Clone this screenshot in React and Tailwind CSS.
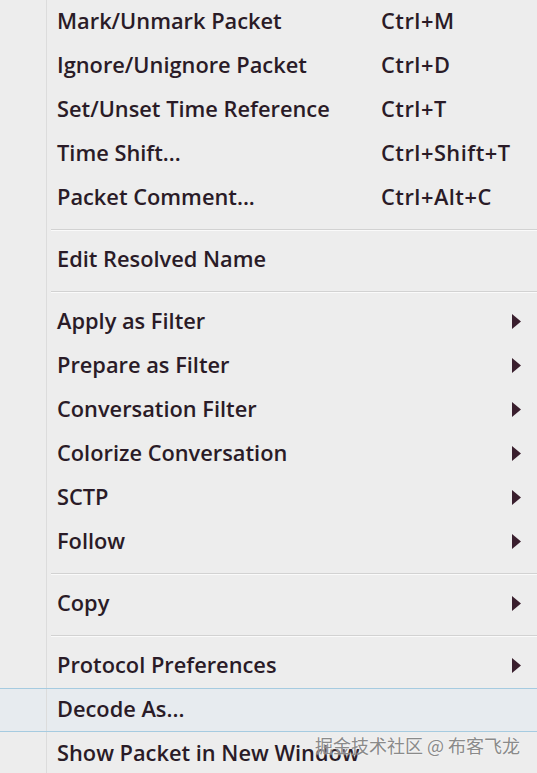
const groups = [
  [
    { label: "Mark/Unmark Packet", key: "Ctrl+M" },
    { label: "Ignore/Unignore Packet", key: "Ctrl+D" },
    { label: "Set/Unset Time Reference", key: "Ctrl+T" },
    { label: "Time Shift...", key: "Ctrl+Shift+T" },
    { label: "Packet Comment...", key: "Ctrl+Alt+C" },
  ],
  [{ label: "Edit Resolved Name" }],
  [
    { label: "Apply as Filter", sub: true },
    { label: "Prepare as Filter", sub: true },
    { label: "Conversation Filter", sub: true },
    { label: "Colorize Conversation", sub: true },
    { label: "SCTP", sub: true },
    { label: "Follow", sub: true },
  ],
  [{ label: "Copy", sub: true }],
  [
    { label: "Protocol Preferences", sub: true },
    { label: "Decode As...", active: true },
    { label: "Show Packet in New Window" },
  ],
];

function Arrow() {
  return (
    <svg width="9" height="15" viewBox="0 0 9 15" className="shrink-0">
      <path d="M0 0 L9 7.5 L0 15 Z" fill="#3a1f2e" />
    </svg>
  );
}

function Row({ item }) {
  return (
    <div
      className={
        "flex h-[44px] items-center " +
        (item.active ? "border-y border-[#a6cbe0] bg-[#e7ebef]" : "")
      }
    >
      <div className="h-full w-[47px] shrink-0 border-r border-[#dcdcdc]" />
      <div className="flex flex-1 items-center pb-[2px] pl-[10px] pr-[16px]">
        <span className="w-[324px] shrink-0">{item.label}</span>
        <span className="flex-1 tracking-[0.5px]">{item.key}</span>
        {item.sub && <Arrow />}
      </div>
    </div>
  );
}

function Separator() {
  return (
    <div className="flex h-[18px]">
      <div className="h-full w-[47px] shrink-0 border-r border-[#dcdcdc]" />
      <div className="flex flex-1 items-center pl-[4px]">
        <div className="h-px w-full bg-[#d2d2d2] shadow-[0_1px_0_#fafafa]" />
      </div>
    </div>
  );
}

export default function App() {
  return (
    <div
      className="relative h-[773px] w-[537px] overflow-hidden bg-[#ededed] text-[21.8px] font-semibold text-[#2a1b27]"
      style={{ fontFamily: '"Open Sans", sans-serif' }}
    >
      <div className="flex flex-col">
        {groups.map((g, i) => (
          <div key={i}>
            {i > 0 && <Separator />}
            {g.map((item) => (
              <Row key={item.label} item={item} />
            ))}
          </div>
        ))}
      </div>

      {/* watermark */}
      <div
        className="absolute bottom-[14px] right-[17px] text-[18px] font-normal text-[#8a8a8a] [text-shadow:0_0_2px_#fff]"
        style={{ fontFamily: '"Noto Sans CJK SC", sans-serif' }}
      >
        掘金技术社区 @ 布客飞龙
      </div>
    </div>
  );
}
